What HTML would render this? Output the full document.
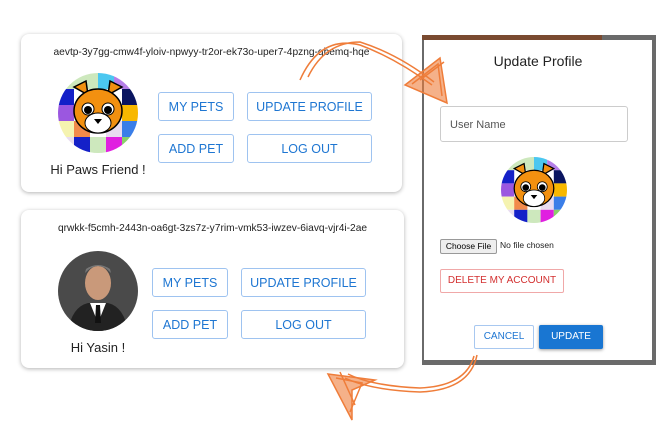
<!DOCTYPE html>
<html><head><style>
*{box-sizing:border-box;margin:0;padding:0}
body{width:667px;height:434px;background:#fff;position:relative;overflow:hidden;font-family:"Liberation Sans",Arial,sans-serif}
.card{position:absolute;background:#fff;border-radius:8px;box-shadow:0 1px 4px rgba(0,0,0,.3)}
.id{position:absolute;font-size:10.2px;color:#222;width:100%;text-align:center}
.btn{position:absolute;border:1px solid #9ec3f0;border-radius:3px;color:#1e76d2;font-size:12.5px;display:flex;align-items:center;justify-content:center;background:#fff}
.hi{position:absolute;font-size:13px;color:#222;text-align:center;width:120px}
.av{position:absolute;border-radius:50%;overflow:hidden}
</style></head><body>
<svg width="0" height="0" style="position:absolute"><defs>
<g id="cat">
<rect x="0" y="0" width="80" height="80" fill="#fff"/>
<rect x="0" y="0" width="40" height="16" fill="#cde8bd"/><rect x="40" y="0" width="16" height="16" fill="#4bc7f0"/><rect x="56" y="0" width="24" height="16" fill="#b57ee8"/>
<rect x="0" y="16" width="16" height="16" fill="#1420c8"/><rect x="64" y="16" width="16" height="16" fill="#0a1560"/>
<rect x="0" y="32" width="16" height="16" fill="#9b57e0"/><rect x="64" y="32" width="16" height="16" fill="#f8b800"/>
<rect x="0" y="48" width="16" height="16" fill="#f5f3b0"/><rect x="16" y="48" width="16" height="16" fill="#f28a4a"/><rect x="48" y="48" width="16" height="16" fill="#e8dcf0"/><rect x="64" y="48" width="16" height="16" fill="#3a7ee8"/>
<rect x="0" y="64" width="16" height="16" fill="#e8dcf0"/><rect x="16" y="64" width="16" height="16" fill="#1420c8"/><rect x="32" y="64" width="16" height="16" fill="#cde8bd"/><rect x="48" y="64" width="16" height="16" fill="#e020e0"/><rect x="64" y="64" width="16" height="16" fill="#8ad06a"/>
<path d="M16 14 L28 8 L30 22Z M64 14 L52 8 L50 22Z" fill="#f29010" stroke="#000" stroke-width="1.5"/>
<ellipse cx="40" cy="38" rx="24" ry="22" fill="#f29010" stroke="#000" stroke-width="1.5"/>
<ellipse cx="40" cy="50" rx="13" ry="10" fill="#fff" stroke="#000" stroke-width="1"/>
<circle cx="30" cy="36" r="6" fill="#fff" stroke="#000"/><circle cx="50" cy="36" r="6" fill="#fff" stroke="#000"/>
<circle cx="30" cy="37" r="4" fill="#000"/><circle cx="50" cy="37" r="4" fill="#000"/>
<path d="M36 46 L44 46 L40 51Z" fill="#000"/>
</g></defs></svg>

<div class="card" style="left:21px;top:34px;width:381px;height:158px">
<div class="id" style="top:13px">aevtp-3y7gg-cmw4f-yloiv-npwyy-tr2or-ek73o-uper7-4pzng-qbemq-hqe</div>
<div class="av" style="left:37px;top:39px;width:80px;height:80px"><svg width="80" height="80"><use href="#cat"/></svg></div>
<div class="hi" style="left:17px;top:128px">Hi Paws Friend !</div>
<div class="btn" style="left:137px;top:58px;width:76px;height:29px">MY PETS</div>
<div class="btn" style="left:226px;top:58px;width:125px;height:29px">UPDATE PROFILE</div>
<div class="btn" style="left:137px;top:100px;width:76px;height:29px">ADD PET</div>
<div class="btn" style="left:226px;top:100px;width:125px;height:29px">LOG OUT</div>
</div>

<div class="card" style="left:21px;top:210px;width:383px;height:158px">
<div class="id" style="top:13px">qrwkk-f5cmh-2443n-oa6gt-3zs7z-y7rim-vmk53-iwzev-6iavq-vjr4i-2ae</div>
<div class="av" style="left:37px;top:41px;width:80px;height:80px;background:#4a4a4a">
<svg width="80" height="80"><ellipse cx="40" cy="32" rx="13" ry="17" fill="#c9997a"/><path d="M27 22 Q40 8 53 22 L52 18 Q40 10 28 18Z" fill="#777"/><path d="M10 80 Q14 56 30 52 L50 52 Q66 56 70 80Z" fill="#222"/><path d="M32 52 L40 72 L48 52Z" fill="#fff"/><path d="M38 54 L42 54 L43 72 L37 72Z" fill="#111"/></svg></div>
<div class="hi" style="left:17px;top:130px">Hi Yasin !</div>
<div class="btn" style="left:131px;top:58px;width:76px;height:29px">MY PETS</div>
<div class="btn" style="left:220px;top:58px;width:125px;height:29px">UPDATE PROFILE</div>
<div class="btn" style="left:131px;top:100px;width:76px;height:29px">ADD PET</div>
<div class="btn" style="left:220px;top:100px;width:125px;height:29px">LOG OUT</div>
</div>

<div style="position:absolute;left:422px;top:35px;width:234px;height:330px;background:#6a6a6a"></div>
<div style="position:absolute;left:422px;top:35px;width:180px;height:5px;background:#7a4a30"></div>
<div style="position:absolute;left:424px;top:40px;width:228px;height:320px;background:#fff">
<div style="position:absolute;top:13px;width:100%;text-align:center;font-size:14px;color:#222;left:0">Update Profile</div>
<div style="position:absolute;left:16px;top:66px;width:188px;height:36px;border:1px solid #ccc;border-radius:3px;font-size:11px;color:#555;padding:12px 9px">User Name</div>
<div class="av" style="left:77px;top:117px;width:66px;height:66px"><svg width="66" height="66" viewBox="0 0 80 80"><use href="#cat"/></svg></div>
<div style="position:absolute;left:16px;top:199px;width:57px;height:15px;border:1px solid #999;border-radius:2px;background:#eee;font-size:8.5px;text-align:center;line-height:13px">Choose File</div>
<div style="position:absolute;left:76px;top:200px;font-size:8.5px;color:#222">No file chosen</div>
<div style="position:absolute;left:16px;top:229px;width:124px;height:24px;border:1px solid #f0a8a8;border-radius:2px;color:#d32f2f;font-size:10px;text-align:center;line-height:22px">DELETE MY ACCOUNT</div>
<div style="position:absolute;left:50px;top:285px;width:60px;height:24px;border:1px solid #a8c8f0;border-radius:2px;color:#1e76d2;font-size:10px;text-align:center;line-height:22px">CANCEL</div>
<div style="position:absolute;left:115px;top:285px;width:64px;height:24px;background:#1976d2;border-radius:2px;color:#fff;font-size:10px;text-align:center;line-height:24px;box-shadow:0 1px 3px rgba(0,0,0,.4)">UPDATE</div>
</div>

<svg style="position:absolute;left:0;top:0" width="667" height="434" fill="none" stroke="#ef7d3a" stroke-width="1.5">
<path d="M300 80 Q320 35 360 45 Q395 58 432 85"/>
<path d="M308 77 Q325 42 360 42 Q398 54 434 82"/>
<path d="M405 85 L440 58 L447 103 Z" fill="#ef7d3a" fill-opacity=".6"/>
<path d="M412 84 L438 64 L442 96 M420 80 L444 62"/>
<path d="M477 355 Q470 390 420 392 Q370 390 345 378"/>
<path d="M474 356 Q466 386 420 388 Q372 386 348 374"/>
<path d="M328 374 L375 380 L352 390 L352 420 Z" fill="#ef7d3a" fill-opacity=".6"/>
<path d="M336 378 L362 383 L350 412 M340 372 L355 405"/>
</svg>
</body></html>
